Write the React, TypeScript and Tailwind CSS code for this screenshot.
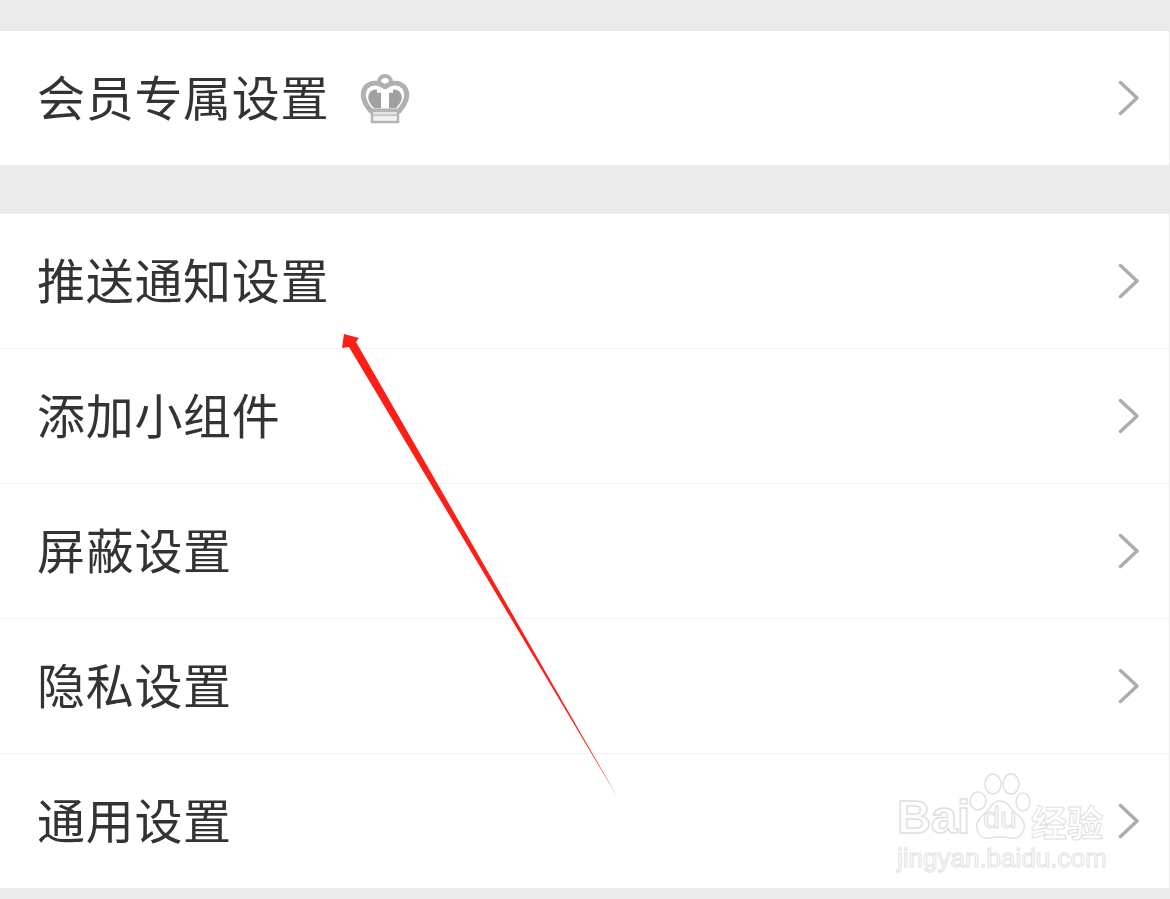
import React from 'react';

function Chevron() {
  return (
    <svg width="24" height="36" viewBox="0 0 24 36" fill="none" className="shrink-0 blur-[0.4px]">
      <path d="M3.5 2.5 L20 18 L3.5 33.5" stroke="#adadad" strokeWidth="3.5" strokeLinecap="round" strokeLinejoin="round" />
    </svg>
  );
}

function Crown() {
  return (
    <svg width="50" height="52" viewBox="0 0 50 52" className="ml-[31px] mt-[1px] blur-[0.6px]">
      <circle cx="25" cy="9" r="6" fill="#fff" stroke="#b0b0b0" strokeWidth="4" />
      <path d="M25 14 C18 9 11 9 6 14 C1 20 3 29 11 38 L39 38 C47 29 49 20 44 14 C39 9 32 9 25 14 Z" fill="#fff" stroke="#b0b0b0" strokeWidth="5" />
      <path d="M9 21 C12 15 19 16 21 19 L21 35 L14 35 C9 30 7 25 9 21 Z" fill="#a0a0a0" />
      <path d="M41 21 C38 15 31 16 29 19 L29 35 L36 35 C41 30 43 25 41 21 Z" fill="#a0a0a0" />
      <path d="M17 18 L33 18" stroke="#fff" strokeWidth="3.5" />
      <path d="M12 38 L38 38 L38 49 L12 49 Z" fill="#f4f4f4" stroke="#b5b5b5" strokeWidth="2.5" />
      <path d="M13 42 L37 42" stroke="#c8c8c8" strokeWidth="2.5" />
    </svg>
  );
}

function Row({ label, crown, last }: { label: string; crown?: boolean; last?: boolean }) {
  return (
    <div className={`mr-px flex items-center bg-white pl-[37px] pr-[28px] ${last ? 'h-[134px]' : 'h-[135px] border-b border-[#f2f2f2]'}`}>
      <span className="pb-[6px] text-[48px] leading-none tracking-[0.7px] text-[#333333] blur-[0.4px] font-['Noto_Sans_CJK_SC',sans-serif]">{label}</span>
      {crown && <Crown />}
      <div className="flex-1" />
      <Chevron />
    </div>
  );
}

function Watermark() {
  return (
    <div className="absolute left-[897px] top-[772px] flex w-[215px] flex-col pointer-events-none">
      <div className="flex h-[72px] items-end">
        <span className="mb-[4px] w-[72px] text-[47px] leading-none font-bold text-white [-webkit-text-stroke:1.5px_#e0e0e0] font-['Liberation_Sans',sans-serif]">Bai</span>
        <div className="relative h-[72px] w-[62px]">
          <svg width="62" height="72" viewBox="0 0 62 72" fill="#ffffff" stroke="#e0e0e0" strokeWidth="1.5">
            <ellipse cx="9" cy="29" rx="8" ry="9" />
            <ellipse cx="24" cy="12" rx="8" ry="10" />
            <ellipse cx="42" cy="12" rx="8" ry="10" />
            <ellipse cx="54" cy="30" rx="7" ry="9" />
            <path d="M31 29 C41 29 41 39 50 44 C60 51 55 68 42 66 C36 65 26 65 20 66 C7 68 4 51 13 44 C21 39 22 29 31 29 Z" />
          </svg>
          <span className="absolute inset-x-0 bottom-[11px] text-center text-[30px] leading-none text-white [-webkit-text-stroke:1px_#dcdcdc] font-['Liberation_Sans',sans-serif]">du</span>
        </div>
        <span className="mb-[5px] text-[36px] leading-none font-bold text-white [-webkit-text-stroke:1px_#e0e0e0] font-['Noto_Sans_CJK_SC',sans-serif]">经验</span>
      </div>
      <span className="mt-[1px] text-[26px] leading-none whitespace-nowrap text-white [-webkit-text-stroke:1px_#e2e2e2] font-['Liberation_Sans',sans-serif]">jingyan.baidu.com</span>
    </div>
  );
}

export default function App() {
  return (
    <div className="relative h-[899px] w-[1170px] overflow-hidden bg-[#ebebeb]">
      <div className="h-[31px]" />
      <Row label="会员专属设置" crown last />
      <div className="h-[49px]" />
      <Row label="推送通知设置" />
      <Row label="添加小组件" />
      <Row label="屏蔽设置" />
      <Row label="隐私设置" />
      <Row label="通用设置" last />

      <svg width="300" height="480" viewBox="0 0 300 480" className="absolute left-[335px] top-[325px]">
        <path d="M9 9 L24 13 L21 17 L283 473 L14 22 L7 23 Z" fill="#fd1f17" />
      </svg>
      <Watermark />
    </div>
  );
}
